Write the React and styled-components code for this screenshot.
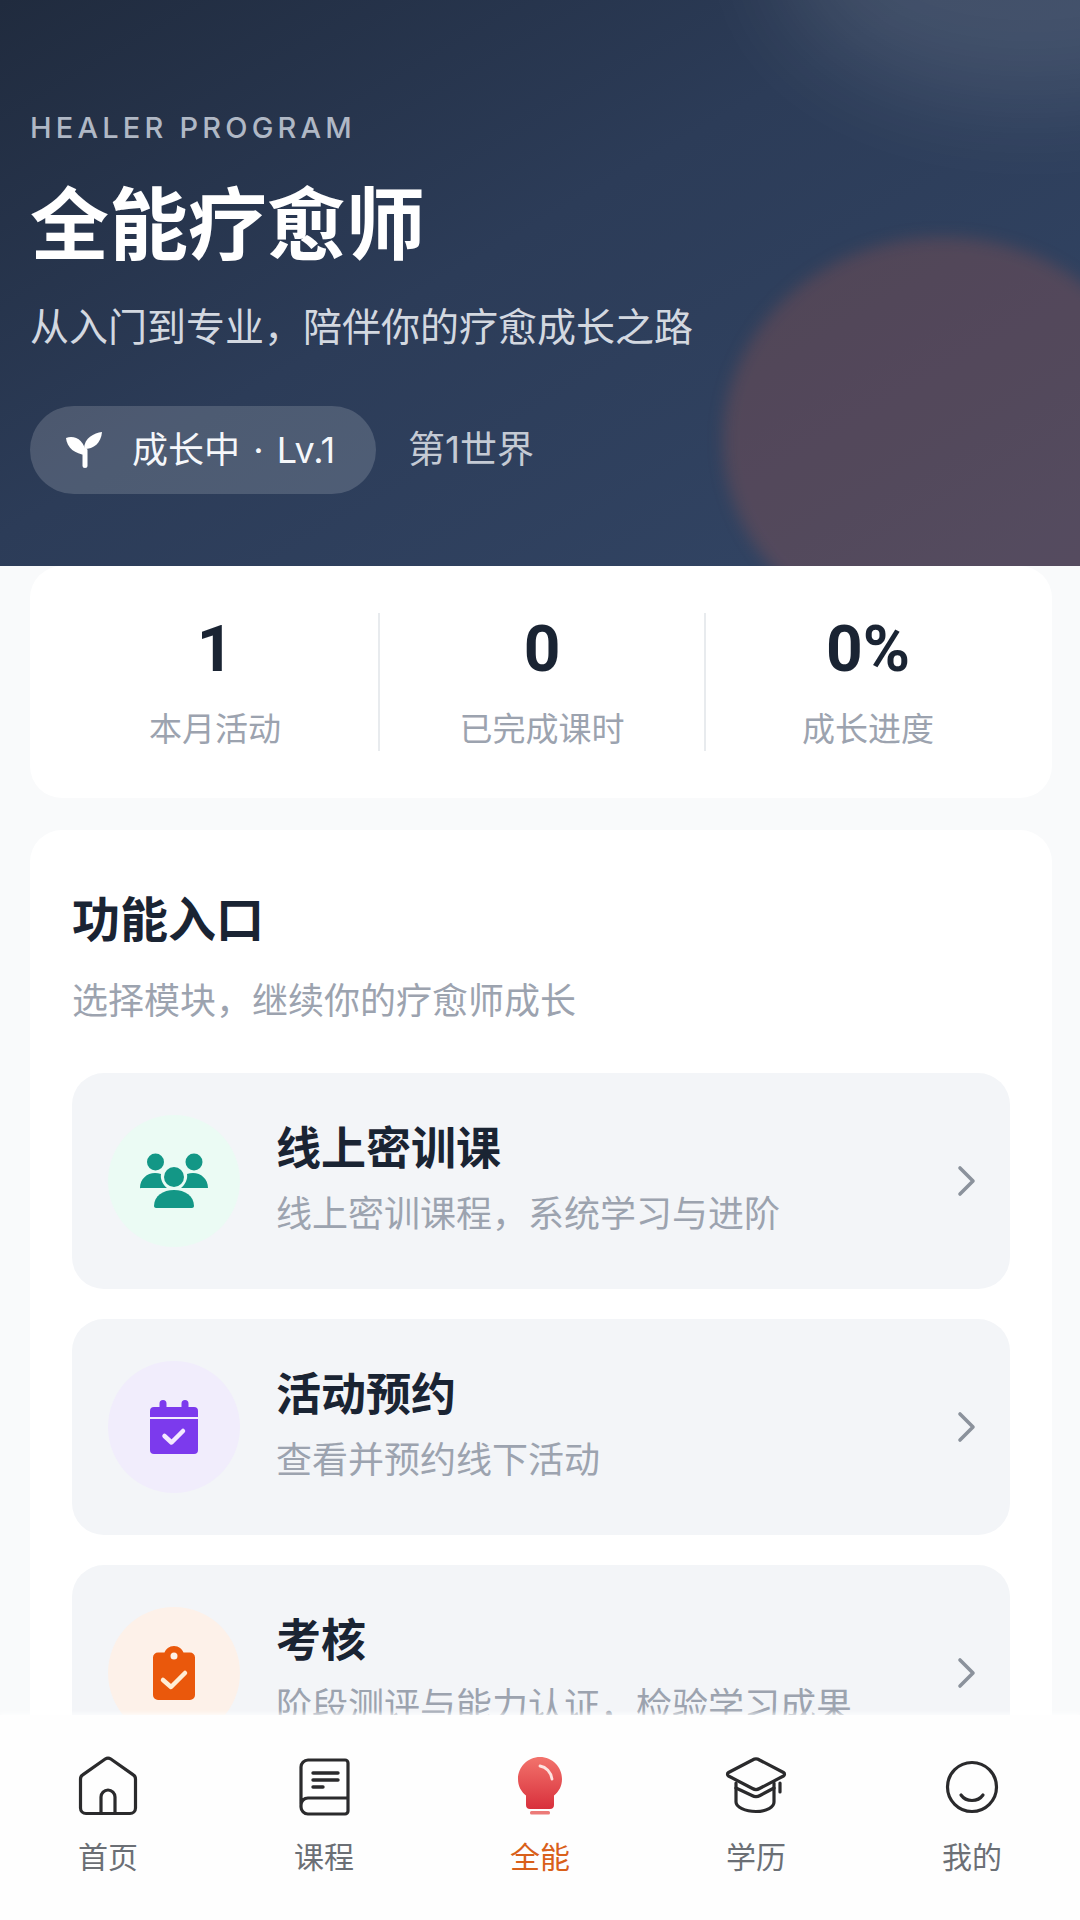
import React from "react";
import styled, { createGlobalStyle } from "styled-components";

const Global = createGlobalStyle`
  html, body { margin: 0; padding: 0; background: #f9fafb; }
  * { box-sizing: border-box; }
  body { font-family: "Inter", "Noto Sans CJK SC", sans-serif; }
`;

const Page = styled.div`
  position: relative;
  width: 1080px;
  height: 1920px;
  overflow: hidden;
  background: #f9fafb;
  display: flex;
  flex-direction: column;
`;

const Hero = styled.header`
  position: relative;
  height: 566px;
  flex: none;
  overflow: hidden;
  padding: 111px 30px 0;
  background: linear-gradient(150deg, #202b3e 0%, #2c3c58 45%, #334666 100%);
`;

const Glow = styled.div`
  position: absolute;
  left: 723px;
  top: 237px;
  width: 440px;
  height: 406px;
  border-radius: 50%;
  background: rgba(232, 100, 70, 0.19);
  filter: blur(8px);
`;

const Sheen = styled.div`
  position: absolute;
  left: 780px;
  top: -190px;
  width: 500px;
  height: 290px;
  border-radius: 50%;
  background: rgba(255, 255, 255, 0.11);
  filter: blur(50px);
`;

const HeroContent = styled.div`
  position: relative;
  display: flex;
  flex-direction: column;
  align-items: flex-start;
`;

const Eyebrow = styled.div`
  font-size: 29px;
  line-height: 34px;
  letter-spacing: 4.2px;
  font-weight: 500;
  color: #b0b8c5;
`;

const HeroTitle = styled.h1`
  margin: 32px 0 0;
  font-size: 79px;
  line-height: 96px;
  font-weight: 700;
  color: #ffffff;
`;

const HeroSub = styled.p`
  margin: 28px 0 0;
  font-size: 39px;
  line-height: 52px;
  color: #d3d8e0;
`;

const BadgeRow = styled.div`
  margin-top: 53px;
  display: flex;
  align-items: center;
  gap: 32px;
`;

const Badge = styled.div`
  width: 346px;
  height: 88px;
  border-radius: 44px;
  padding: 0 0 0 34px;
  display: flex;
  align-items: center;
  gap: 28px;
  background: rgba(255, 255, 255, 0.16);
  color: #f5f7fa;
  font-size: 36px;
`;

const BadgeText = styled.span`
  margin-top: -7px;
`;

const Dot = styled.span`
  margin: 0 3px;
`;

const World = styled.div`
  margin-top: -7px;
  font-size: 37px;
  color: #c4cad4;
`;

const Body = styled.main`
  flex: 1;
  min-height: 0;
  padding: 0 28px 0 30px;
  display: flex;
  flex-direction: column;
  gap: 32px;
`;

const Stats = styled.section`
  height: 232px;
  flex: none;
  background: #fff;
  border-radius: 32px;
  padding: 0 22px;
  display: grid;
  grid-template-columns: 1fr 1fr 1fr;
  align-items: center;
`;

const Stat = styled.div`
  height: 138px;
  display: flex;
  flex-direction: column;
  align-items: center;
  justify-content: space-between;
  border-left: ${(p) => (p.$divider ? "2px solid #e8ebee" : "none")};
`;

const StatValue = styled.div`
  margin-top: 2px;
  font-family: "Roboto", sans-serif;
  font-size: 64px;
  line-height: 70px;
  font-weight: 700;
  color: #1a2433;
`;

const StatLabel = styled.div`
  font-size: 33px;
  line-height: 44px;
  color: #9ca3af;
`;

const Panel = styled.section`
  flex: none;
  background: #fff;
  border-radius: 32px 32px 0 0;
  padding: 58px 42px 0;
  display: flex;
  flex-direction: column;
`;

const PanelTitle = styled.h2`
  margin: 0;
  font-size: 48px;
  line-height: 64px;
  font-weight: 700;
  color: #1a2433;
`;

const PanelSub = styled.p`
  margin: 24px 0 0;
  font-size: 36px;
  line-height: 50px;
  color: #9ca3af;
`;

const Rows = styled.div`
  margin-top: 47px;
  display: flex;
  flex-direction: column;
  gap: 30px;
`;

const Row = styled.div`
  height: 216px;
  border-radius: 32px;
  background: #f3f5f8;
  padding: 0 36px;
  display: flex;
  align-items: center;
  gap: 36px;
`;

const IconCircle = styled.div`
  width: 132px;
  height: 132px;
  flex: none;
  border-radius: 50%;
  background: ${(p) => p.$bg};
  display: flex;
  align-items: center;
  justify-content: center;
`;

const RowText = styled.div`
  flex: 1;
  min-width: 0;
`;

const RowTitle = styled.div`
  margin-top: -4px;
  font-size: 45px;
  line-height: 58px;
  font-weight: 700;
  color: #1a2433;
`;

const RowSub = styled.div`
  margin-top: 11px;
  font-size: 36px;
  line-height: 50px;
  color: #9ca3af;
`;

const Chevron = styled.svg`
  width: 24px;
  height: 34px;
  flex: none;
  margin-right: -5px;
`;

const TabBar = styled.nav`
  position: absolute;
  left: 0;
  right: 0;
  bottom: 0;
  height: 205px;
  background: #fefefe;
  box-shadow: 0 -2px 4px rgba(255, 255, 255, 0.7);
  display: grid;
  grid-template-columns: repeat(5, 1fr);
`;

const Tab = styled.div`
  display: flex;
  flex-direction: column;
  align-items: center;
  padding-top: 39px;
`;

const TabIcon = styled.svg`
  width: 66px;
  height: 66px;
`;

const TabLabel = styled.div`
  margin-top: 17px;
  font-size: 30px;
  line-height: 40px;
  color: ${(p) => (p.$active ? "#d9601a" : "#6b6f75")};
`;

const Sprout = () => (
  <svg width="40" height="40" viewBox="0 0 40 40" fill="#fff">
    <path d="M2 8C10 5 21 9 22 25 11 24 3 18 2 8Z" />
    <path d="M38 2C30 3 20 8 20 19 30 19 37 13 38 2Z" />
    <rect x="18.500" y="18" width="5" height="20" rx="2.500" />
  </svg>
);

const PeopleIcon = () => (
  <svg width="70" height="56" viewBox="0 0 70 56" fill="#139786">
    <circle cx="16.500" cy="9" r="8.500" />
    <circle cx="55" cy="9" r="8.500" />
    <circle cx="35" cy="24" r="10" />
    <path d="M1 35c0-9 7-15 15-15 2 0 4 .4 6 1-1 5 2 11 6 14H2a1 1 0 0 1-1 0Z" />
    <path d="M69 35c0-9-7-15-15-15-2 0-4 .4-6 1 1 5-2 11-6 14h26Z" />
    <path d="M15 54c0-10 9-16 20-16s20 6 20 16c0 1-1 2-2 2H17c-1 0-2-1-2-2Z" transform="translate(0 -1)" />
  </svg>
);

const CalendarIcon = () => (
  <svg width="48" height="54" viewBox="0 0 48 54">
    <path fill="#7c3aed" d="M13 0a3.500 3.500 0 0 1 3.500 3.500V7h15V3.500a3.500 3.500 0 0 1 7 0V7H44a4 4 0 0 1 4 4v6H0v-6a4 4 0 0 1 4-4h5.500V3.500A3.500 3.500 0 0 1 13 0Z" />
    <path fill="#7c3aed" d="M0 19h48v31a4 4 0 0 1-4 4H4a4 4 0 0 1-4-4Z" />
    <path d="M14.500 36l7 6.500L33 31" fill="none" stroke="#f3e8ff" strokeWidth="4.500" strokeLinecap="round" strokeLinejoin="round" />
  </svg>
);

const ClipboardIcon = () => (
  <svg width="42" height="54" viewBox="0 0 42 54">
    <path fillRule="evenodd" fill="#ea580c" d="M21 0c5 0 8 3 9.500 6.500H37a5 5 0 0 1 5 5V49a5 5 0 0 1-5 5H5a5 5 0 0 1-5-5V11.500a5 5 0 0 1 5-5h6.500C13 3 16 0 21 0Zm0 6.500a3.500 3.500 0 1 0 0 7 3.500 3.500 0 0 0 0-7Z" />
    <path d="M10 34l8 7 14-14" fill="none" stroke="#ffedd5" strokeWidth="4.500" strokeLinecap="round" strokeLinejoin="round" />
  </svg>
);

const Arrow = () => (
  <Chevron viewBox="0 0 24 34" fill="none" stroke="#8b929c" strokeWidth="3.600" strokeLinecap="round" strokeLinejoin="round">
    <path d="M5 4l13 13L5 30" />
  </Chevron>
);

const stroke = { fill: "none", stroke: "#2a2a2c", strokeWidth: 3.2, strokeLinecap: "round", strokeLinejoin: "round" };

const HomeIcon = () => (
  <TabIcon viewBox="0 0 66 66" {...stroke}>
    <path d="M5.500 25c0-1.700.8-3.200 2.200-4.100L30.200 5a5 5 0 0 1 5.600 0l22.500 15.900c1.400.9 2.200 2.400 2.200 4.100v29a5.500 5.500 0 0 1-5.500 5.500H11A5.500 5.500 0 0 1 5.500 54Z" />
    <path d="M26 59V43a7 7 0 0 1 14 0v16" />
  </TabIcon>
);

const BookIcon = () => (
  <TabIcon viewBox="0 0 66 66" {...stroke}>
    <path d="M10 50V13a7 7 0 0 1 7-7h37a3 3 0 0 1 3 3v35H17c-4 0-7 3-7 7v2a7 7 0 0 0 7 7h37a3 3 0 0 0 3-3V44" />
    <path d="M22 19h25M22 26h25M22 33h10" strokeWidth="3.400" />
  </TabIcon>
);

const BulbIcon = () => (
  <TabIcon viewBox="0 0 66 66">
    <defs>
      <linearGradient id="bulb" x1="0" y1="0" x2="0" y2="1">
        <stop offset="0" stopColor="#f2736c" />
        <stop offset="1" stopColor="#d8303c" />
      </linearGradient>
    </defs>
    <path fill="url(#bulb)" d="M33 3c12.200 0 22 9.800 22 22 0 7-3 12.500-8 16.500V51c0 2.500-1.500 4-4 4H23c-2.500 0-4-1.500-4-4v-9.500C14 37.500 11 32 11 25 11 12.800 20.800 3 33 3Z" />
    <path d="M33 12c6 1 11 6 12 13" fill="none" stroke="#fde3e0" strokeWidth="2.800" strokeLinecap="round" />
    <rect x="23" y="57" width="20" height="3.500" rx="1.500" fill="#ec7a78" />
  </TabIcon>
);

const CapIcon = () => (
  <TabIcon viewBox="0 0 66 66" {...stroke}>
    <path d="M29.500 6a7 7 0 0 1 7 0l24 12.500a2 2 0 0 1 0 3.500l-24 12.500a7 7 0 0 1-7 0L5.500 22a2 2 0 0 1 0-3.500Z" />
    <path d="M13 29v19c0 5 9 9.500 20 9.500s18-4.500 18-9.500V29" />
    <path d="M13 34l16 7.500a8 8 0 0 0 8 0L51 34" />
    <path d="M57 29v9" strokeWidth="3.200" />
  </TabIcon>
);

const FaceIcon = () => (
  <TabIcon viewBox="0 0 66 66" {...stroke}>
    <circle cx="33" cy="33" r="24.500" />
    <path d="M22 41c2.500 3.500 7 5.500 11 5.500s8.500-2 11-5.500" />
  </TabIcon>
);

const stats = [
  { value: "1", label: "本月活动" },
  { value: "0", label: "已完成课时" },
  { value: "0%", label: "成长进度" },
];

const rows = [
  { title: "线上密训课", sub: "线上密训课程\uFF0C系统学习与进阶", bg: "#ebfbf4", icon: <PeopleIcon /> },
  { title: "活动预约", sub: "查看并预约线下活动", bg: "#f1edfc", icon: <CalendarIcon /> },
  { title: "考核", sub: "阶段测评与能力认证\uFF0C检验学习成果", bg: "#fdf1e9", icon: <ClipboardIcon /> },
];

const tabs = [
  { label: "首页", icon: <HomeIcon /> },
  { label: "课程", icon: <BookIcon /> },
  { label: "全能", icon: <BulbIcon />, active: true },
  { label: "学历", icon: <CapIcon /> },
  { label: "我的", icon: <FaceIcon /> },
];

export default function App() {
  return (
    <>
      <Global />
      <Page>
        <Hero>
          <Sheen />
          <Glow />
          <HeroContent>
            <Eyebrow>HEALER PROGRAM</Eyebrow>
            <HeroTitle>全能疗愈师</HeroTitle>
            <HeroSub>{"从入门到专业\uFF0C陪伴你的疗愈成长之路"}</HeroSub>
            <BadgeRow>
              <Badge>
                <Sprout />
                <BadgeText>
                  成长中<Dot> · </Dot>Lv.1
                </BadgeText>
              </Badge>
              <World>第1世界</World>
            </BadgeRow>
          </HeroContent>
        </Hero>
        <Body>
          <Stats>
            {stats.map((s, i) => (
              <Stat key={s.label} $divider={i > 0}>
                <StatValue>{s.value}</StatValue>
                <StatLabel>{s.label}</StatLabel>
              </Stat>
            ))}
          </Stats>
          <Panel>
            <PanelTitle>功能入口</PanelTitle>
            <PanelSub>{"选择模块\uFF0C继续你的疗愈师成长"}</PanelSub>
            <Rows>
              {rows.map((r) => (
                <Row key={r.title}>
                  <IconCircle $bg={r.bg}>{r.icon}</IconCircle>
                  <RowText>
                    <RowTitle>{r.title}</RowTitle>
                    <RowSub>{r.sub}</RowSub>
                  </RowText>
                  <Arrow />
                </Row>
              ))}
            </Rows>
          </Panel>
        </Body>
        <TabBar>
          {tabs.map((t) => (
            <Tab key={t.label}>
              {t.icon}
              <TabLabel $active={t.active}>{t.label}</TabLabel>
            </Tab>
          ))}
        </TabBar>
      </Page>
    </>
  );
}
